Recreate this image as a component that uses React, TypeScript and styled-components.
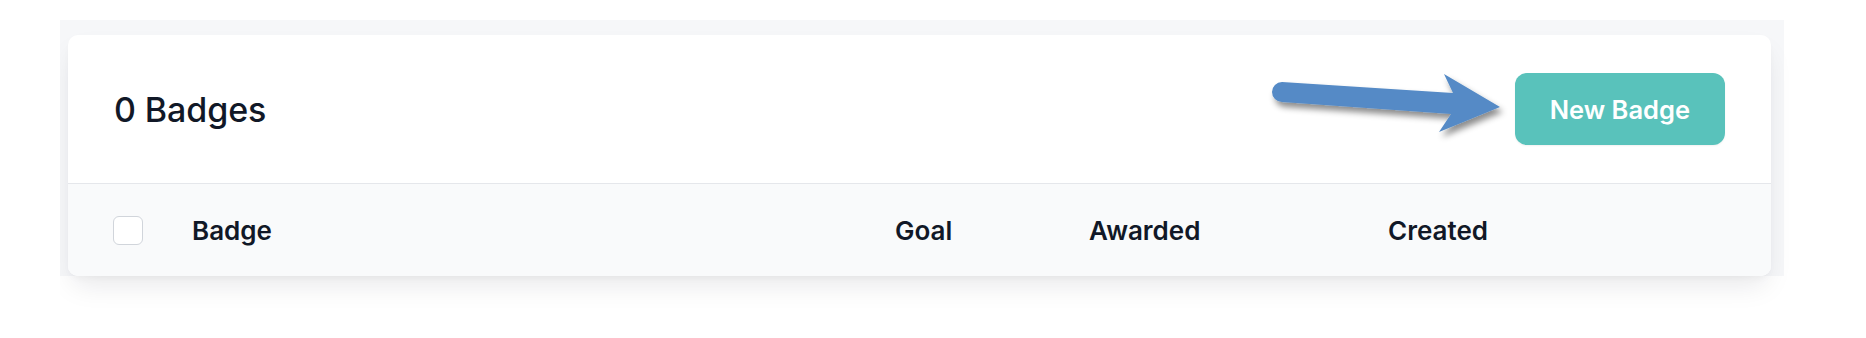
import React from 'react';
import styled, { createGlobalStyle } from 'styled-components';

const GlobalStyle = createGlobalStyle`
  html, body {
    margin: 0;
    padding: 0;
    background: #ffffff;
  }
  body {
    font-family: Inter, 'Noto Sans', 'Liberation Sans', sans-serif;
    color: #111827;
    -webkit-font-smoothing: antialiased;
  }
`;

const columns = ['Badge', 'Goal', 'Awarded', 'Created'];

const Frame = styled.div`
  margin-left: 60px;
  padding-top: 20px;
  height: 318px;
  overflow: hidden;
  box-sizing: border-box;
`;

const Surface = styled.div`
  width: 1724px;
  box-sizing: border-box;
  padding: 15px 13px 0 8px;
  background: #f6f7f9;
`;

const Card = styled.div`
  background: #ffffff;
  border-radius: 10px;
  box-shadow: 0 14px 28px -6px rgba(17, 24, 39, 0.1),
    0 4px 10px -4px rgba(17, 24, 39, 0.06);
`;

const CardHeader = styled.div`
  position: relative;
  height: 148px;
  display: flex;
  align-items: center;
  justify-content: space-between;
  padding: 0 46px;
  border-bottom: 1px solid #e5e7eb;
`;

const Title = styled.h2`
  margin: 0;
  font-size: 34px;
  font-weight: 500;
  letter-spacing: -0.1px;
  color: #111827;
`;

const PrimaryButton = styled.button`
  height: 72px;
  padding: 0 35px;
  border: 0;
  border-radius: 12px;
  background: #59c2bb;
  color: #ffffff;
  font-family: inherit;
  font-size: 25.5px;
  font-weight: 600;
  cursor: pointer;
  box-shadow: 0 1px 2px rgba(0, 0, 0, 0.06);
`;

const Pointer = styled.svg`
  position: absolute;
  left: 1192px;
  top: 30px;
  width: 250px;
  height: 80px;
  overflow: visible;
`;

const TableHead = styled.div`
  display: grid;
  grid-template-columns: 79px 703px 194px 299px 1fr;
  align-items: center;
  height: 92px;
  padding-left: 45px;
  background: #f9fafb;
  border-radius: 0 0 10px 10px;
`;

const Checkbox = styled.span`
  display: block;
  width: 30px;
  height: 29px;
  box-sizing: border-box;
  border: 1.5px solid #d1d5db;
  border-radius: 6px;
  background: #ffffff;
`;

const ColumnLabel = styled.span`
  font-size: 26px;
  font-weight: 600;
  color: #111827;
`;

const Arrow = () => (
  <Pointer viewBox="0 0 250 80">
    <defs>
      <filter id="arrow-shadow" x="-10%" y="-30%" width="130%" height="180%">
        <feDropShadow dx="3" dy="5" stdDeviation="3" floodColor="#000" floodOpacity="0.45" />
      </filter>
    </defs>
    <path
      d="M22 17 L193 28 L184 9 L240 42 L179 67 L191 49 L22 37 A10 10 0 0 1 22 17 Z"
      fill="#548ac6"
      filter="url(#arrow-shadow)"
    />
  </Pointer>
);

export default function App() {
  return (
    <>
      <GlobalStyle />
      <Frame>
        <Surface>
          <Card>
            <CardHeader>
              <Title>0 Badges</Title>
              <Arrow />
              <PrimaryButton>New Badge</PrimaryButton>
            </CardHeader>
            <TableHead>
              <Checkbox />
              {columns.map((c) => (
                <ColumnLabel key={c}>{c}</ColumnLabel>
              ))}
            </TableHead>
          </Card>
        </Surface>
      </Frame>
    </>
  );
}
